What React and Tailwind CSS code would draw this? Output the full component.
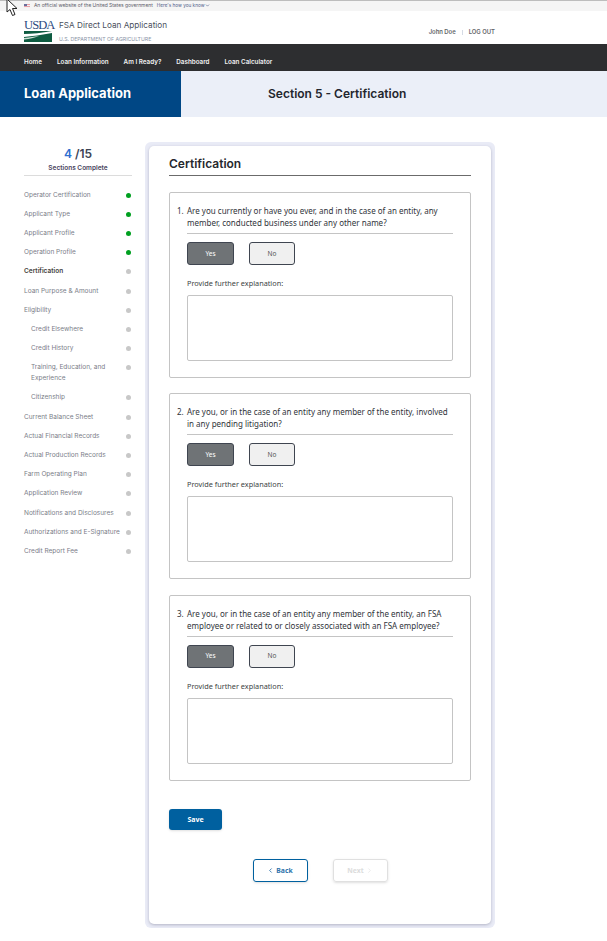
import { ChevronLeft, ChevronRight, ChevronDown } from "lucide-react";

const steps = [
  { name: "Operator Certification", done: true },
  { name: "Applicant Type", done: true },
  { name: "Applicant Profile", done: true },
  { name: "Operation Profile", done: true },
  { name: "Certification", active: true },
  { name: "Loan Purpose & Amount" },
  { name: "Eligibility" },
  { name: "Credit Elsewhere", sub: true },
  { name: "Credit History", sub: true },
  { name: "Training, Education, and Experience", sub: true },
  { name: "Citizenship", sub: true },
  { name: "Current Balance Sheet" },
  { name: "Actual Financial Records" },
  { name: "Actual Production Records" },
  { name: "Farm Operating Plan" },
  { name: "Application Review" },
  { name: "Notifications and Disclosures" },
  { name: "Authorizations and E-Signature" },
  { name: "Credit Report Fee" },
];

const questions = [
  "Are you currently or have you ever, and in the case of an entity, any member, conducted business under any other name?",
  "Are you, or in the case of an entity any member of the entity, involved in any pending litigation?",
  "Are you, or in the case of an entity any member of the entity, an FSA employee or related to or closely associated with an FSA employee?",
];

function Cursor() {
  return (
    <svg className="absolute left-[6px] top-0 z-10" width="13" height="17" viewBox="0 0 13 17">
      <path d="M1 -1 L1 12 L4 9.5 L6.5 15.5 L9 14.5 L6.5 8.5 L11 8.5 Z" fill="#fff" stroke="#222" strokeWidth="1" />
    </svg>
  );
}

function Flag() {
  return (
    <svg width="6" height="4" viewBox="0 0 6 4">
      <rect width="6" height="4" fill="#e8a0a8" />
      <rect y="1" width="6" height="1" fill="#f4f0f0" />
      <rect y="3" width="6" height="1" fill="#f4f0f0" />
      <rect width="3" height="2" fill="#6a6f9c" />
    </svg>
  );
}

function Logo() {
  return (
    <div className="flex flex-col w-[28px] mt-[9px]">
      <span className="font-['Liberation_Serif',serif] text-[12.5px] leading-[10px] tracking-[-0.9px] text-[#2a4a80]">USDA</span>
      <svg className="mt-px" width="28" height="11" viewBox="0 0 28 11">
        <rect width="28" height="11" fill="#0f5c42" />
        <path d="M0 3 C8 3 18 2 28 0 L28 2 C18 4 8 5 0 6 Z" fill="#fff" />
        <path d="M0 7 C6 6 10 6 15 5 C10 7 6 8 0 8.5 Z" fill="#cfe0d8" />
      </svg>
    </div>
  );
}

function Header() {
  return (
    <header>
      <div className="h-[11px] border-t border-[#bdbdbd] bg-[#f5f5f5] pl-6 flex items-center gap-[4px] font-['Inter',sans-serif] text-[4.9px] text-[#5c5c6a]">
        <Flag />
        <span>An official website of the United States government</span>
        <span className="flex items-center text-[4.7px] text-[#50608a]">
          Here's how you know
          <ChevronDown size={5} strokeWidth={3} />
        </span>
      </div>
      <div className="h-[33px] pl-6 pr-[112px] flex items-start justify-between bg-white">
        <div className="flex items-start gap-[7px]">
          <Logo />
          <div className="flex flex-col font-['Inter',sans-serif] mt-[9px]">
            <span className="text-[8.2px] leading-[10px] text-[#4a4f5c]">FSA Direct Loan Application</span>
            <span className="mt-[6px] text-[5.2px] leading-[7px] text-[#8a94a6]">U.S. DEPARTMENT OF AGRICULTURE</span>
          </div>
        </div>
        <div className="mt-[17px] flex items-center gap-[6px] font-['Inter',sans-serif] text-[5.9px] leading-[8px] font-semibold text-[#5f6468]">
          <span>John Doe</span>
          <span className="h-[5px] w-px bg-[#d5dbe5]"></span>
          <span>LOG OUT</span>
        </div>
      </div>
      <nav className="h-[27px] bg-[#2d2e30] pl-6 pt-[10px] flex items-center gap-[15px] font-['Inter',sans-serif] text-[6.3px] font-semibold text-[#f0f0f0]">
        <a>Home</a>
        <a>Loan Information</a>
        <a>Am I Ready?</a>
        <a>Dashboard</a>
        <a>Loan Calculator</a>
      </nav>
      <div className="h-[46px] flex font-['Inter',sans-serif]">
        <div className="w-[181px] bg-[#004785] pl-6 flex items-center text-[13px] font-bold text-white">Loan Application</div>
        <div className="flex-1 bg-[#ebeff8] pl-[87px] flex items-center text-[12px] font-semibold text-[#23262e]">
          Section 5 - Certification
        </div>
      </div>
    </header>
  );
}

function Sidebar() {
  return (
    <aside className="w-[108px] font-['Inter',sans-serif]">
      <div className="pt-[29px] pb-[3px] border-b border-[#dcdcdc] flex flex-col items-center">
        <div className="text-[12px] leading-[15px] font-semibold text-[#3c4454]">
          <span className="text-[#2f6fd0]">4</span> /15
        </div>
        <div className="mt-[3px] text-[6.5px] leading-[8px] font-semibold text-[#4b4460]">Sections Complete</div>
      </div>
      <ul className="mt-[9.5px]">
        {steps.map((s) => (
          <li key={s.name} className={"flex items-start justify-between py-[4.1px] " + (s.sub ? "pl-[7px]" : "")}>
            <span className={"flex-1 pr-[5px] text-[6.5px] leading-[11px] " + (s.active ? "font-semibold text-[#45423c]" : "text-[#7a7d88]")}>
              {s.name}
            </span>
            <span className={"mt-[3px] mr-[1.5px] h-[5px] w-[5px] shrink-0 rounded-full " + (s.done ? "bg-[#00a020]" : "bg-[#c8c8c8]")}></span>
          </li>
        ))}
      </ul>
    </aside>
  );
}

function Question({ n, text }) {
  return (
    <section className="h-[186px] border border-[#c4c4c4] rounded-[2px] pl-[17px] pr-[17px] pt-[12px]">
      <div className="border-b border-[#c4c4c4] pb-[4px] min-h-[29px] relative text-[8px] leading-[12px] text-[#30343a]">
        <span className="absolute -left-[10px] top-0">{n}.</span>
        {text}
      </div>
      <div className="mt-[8px] flex gap-[15px] text-[6.5px]">
        <button className="w-[47px] h-[23px] rounded-[3px] border border-[#3f4550] bg-[#6f7376] text-white">Yes</button>
        <button className="w-[46px] h-[23px] rounded-[3px] border border-[#3f4550] bg-[#f0f0f0] text-[#555]">No</button>
      </div>
      <label className="block mt-[14px] text-[7.3px] leading-[9px] text-[#3c3f44]">Provide further explanation:</label>
      <textarea className="block mt-[7px] w-full h-[66px] border border-[#c4c4c4] rounded-[2px] bg-white resize-none"></textarea>
    </section>
  );
}

function Card() {
  return (
    <main className="mt-[25px] w-[350px] rounded-[6px] bg-[#e9ebf6] p-[4px] h-[786px]">
      <div className="h-full rounded-[5px] bg-white shadow-[0_1px_3px_rgba(80,80,110,0.35)] px-[20px] pt-[10px] font-['Noto_Sans',sans-serif]">
        <h2 className="h-[20px] border-b border-[#6b6b6b] font-['Inter',sans-serif] text-[12px] leading-[15px] font-semibold text-[#26282e]">Certification</h2>
        <div className="mt-[16px] flex flex-col gap-[15.4px]">
          {questions.map((q, i) => (
            <Question key={i} n={i + 1} text={q} />
          ))}
        </div>
        <button className="mt-[28.5px] block w-[53px] h-[21px] rounded-[3px] bg-[#00609f] text-[7px] font-bold text-white shadow-sm">Save</button>
        <div className="mt-[29px] flex justify-center gap-[25px] text-[6.8px] font-bold">
          <button className="w-[55px] h-[23px] rounded-[3px] border border-[#00609f] text-[#2f74ac] flex items-center justify-center gap-[2px] shadow-sm">
            <ChevronLeft size={7} strokeWidth={3} />
            Back
          </button>
          <button className="w-[55px] h-[23px] rounded-[3px] border border-[#e0e0e0] text-[#dcdcdc] flex items-center justify-center gap-[2px] shadow-sm">
            Next
            <ChevronRight size={7} strokeWidth={2} />
          </button>
        </div>
      </div>
    </main>
  );
}

export default function App() {
  return (
    <div className="relative w-[607px] h-[941px] bg-white overflow-hidden">
      <Cursor />
      <Header />
      <div className="flex pl-6 gap-[13px]">
        <Sidebar />
        <Card />
      </div>
    </div>
  );
}
